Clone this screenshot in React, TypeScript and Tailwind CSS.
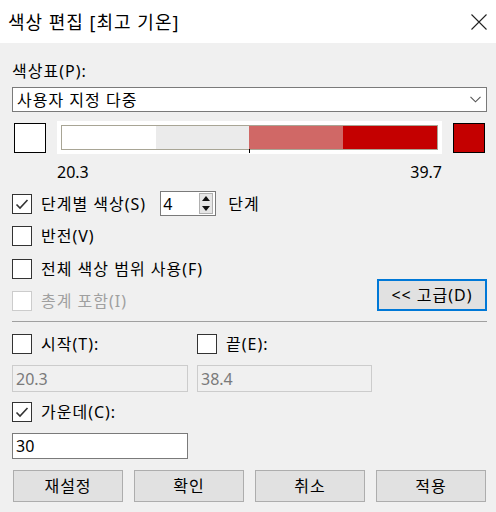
import React from "react";

const font = { fontFamily: '"Noto Sans", "Noto Sans CJK KR", sans-serif' };

function Check({ checked = false, disabled = false }: { checked?: boolean; disabled?: boolean }) {
  return (
    <div
      className={`w-[20px] h-[20px] bg-white border shrink-0 flex items-center justify-center ${
        disabled ? "border-[#cccccc]" : "border-[#333333]"
      }`}
    >
      {checked && (
        <svg width="16" height="16" viewBox="0 0 16 16">
          <path d="M2.5 8.5 L6 12 L13.5 4" fill="none" stroke="#333333" strokeWidth="1.6" />
        </svg>
      )}
    </div>
  );
}

function CheckRow({
  label,
  checked,
  disabled,
}: {
  label: string;
  checked?: boolean;
  disabled?: boolean;
}) {
  return (
    <div className="flex items-center gap-[9px] h-[20px]">
      <Check checked={checked} disabled={disabled} />
      <span
        className={`text-[16px] leading-[20px] tracking-[1px] ${
          disabled ? "text-[#a0a0a0]" : "text-black"
        }`}
      >
        {label}
      </span>
    </div>
  );
}

function Btn({ children }: { children: React.ReactNode }) {
  return (
    <div className="w-[110px] h-[32px] bg-[#e1e1e1] border border-[#adadad] flex items-center justify-center text-[16px] leading-[20px] tracking-[1px]">
      {children}
    </div>
  );
}

export default function App() {
  return (
    <div className="w-[496px] h-[512px] bg-[#f0f0f0] text-black overflow-hidden" style={font}>
      {/* title bar */}
      <div className="h-[43px] bg-white flex items-center justify-between pl-[8px] pr-[9px]">
        <span className="text-[18px] leading-[24px] tracking-[1px]">색상 편집 [최고 기온]</span>
        <svg width="16" height="16" viewBox="0 0 16 16">
          <path d="M0.5 0.5 L15.5 15.5 M15.5 0.5 L0.5 15.5" stroke="#222" strokeWidth="1.1" />
        </svg>
      </div>

      <div className="pl-[12px] pr-[9px] flex flex-col">
        <div className="mt-[18px] h-[20px] text-[16px] leading-[20px] tracking-[1px]">색상표(P):</div>

        {/* dropdown */}
        <div className="mt-[6px] h-[25px] bg-white border border-[#7a7a7a] flex items-center justify-between pl-[4px] pr-[5px]">
          <span className="text-[16px] leading-[20px] tracking-[1px]">사용자 지정 다중</span>
          <svg width="11" height="7" viewBox="0 0 11 7">
            <path d="M0.5 0.8 L5.5 5.8 L10.5 0.8" fill="none" stroke="#555" strokeWidth="1.1" />
          </svg>
        </div>

        {/* colour ramp */}
        <div className="mt-[9px] h-[33px] flex items-center">
          <div className="ml-[2px] w-[32px] h-[30px] bg-white border border-black" />
          <div className="ml-[11px] w-[385px] h-[33px] bg-white p-[4px] relative">
            <div className="h-full border border-[#a8a595] flex">
              <div className="w-[94px] bg-white" />
              <div className="w-[93px] bg-[#ebebeb]" />
              <div className="w-[94px] bg-[#d06866]" />
              <div className="flex-1 bg-[#c40000]" />
            </div>
            <div className="absolute left-[192px] top-[28px] w-[1px] h-[4px] bg-black" />
          </div>
          <div className="ml-[11px] w-[32px] h-[30px] bg-[#c40000] border border-black" />
        </div>

        <div className="mt-[8px] h-[20px] flex justify-between pl-[45px] w-[430px] text-[16px] leading-[20px]">
          <span>20.3</span>
          <span>39.7</span>
        </div>

        {/* steps row */}
        <div className="mt-[9px] h-[25px] flex items-center">
          <CheckRow label="단계별 색상(S)" checked />
          <div className="ml-[14px] w-[56px] h-[25px] bg-white border border-[#7a7a7a] flex items-center justify-between pl-[2px] pr-[2px]">
            <span className="text-[16px] leading-[20px]">4</span>
            <div className="w-[14px] h-[21px] bg-[#e6e6e6] border border-[#b0b0b0] flex flex-col">
              <div className="flex-1 flex items-center justify-center">
                <svg width="8" height="5" viewBox="0 0 8 5">
                  <path d="M0 5 L4 0 L8 5 Z" fill="#111" />
                </svg>
              </div>
              <div className="flex-1 flex items-center justify-center">
                <svg width="8" height="5" viewBox="0 0 8 5">
                  <path d="M0 0 L4 5 L8 0 Z" fill="#111" />
                </svg>
              </div>
            </div>
          </div>
          <span className="ml-[12px] text-[16px] leading-[20px] tracking-[1px]">단계</span>
        </div>

        <div className="mt-[10px]">
          <CheckRow label="반전(V)" />
        </div>
        <div className="mt-[13px]">
          <CheckRow label="전체 색상 범위 사용(F)" />
        </div>

        <div className="h-[32px] flex items-end justify-between">
          <CheckRow label="총계 포함(I)" disabled />
          <div className="w-[110px] h-[32px] bg-[#e1e1e1] border-2 border-[#0078d7] flex items-center justify-center text-[16px] leading-[20px] tracking-[1px]">
            &lt;&lt; 고급(D)
          </div>
        </div>

        <div className="mt-[10px] h-[1px] bg-[#a0a0a0]" />

        <div className="mt-[12px] flex gap-[9px]">
          <div className="w-[176px]">
            <CheckRow label="시작(T):" />
          </div>
          <CheckRow label="끝(E):" />
        </div>

        <div className="mt-[11px] flex gap-[9px]">
          <div className="w-[176px] h-[27px] border border-[#cccccc] bg-[#f0f0f0] flex items-center pl-[3px] text-[16px] leading-[20px] text-[#7a7a7a]">
            20.3
          </div>
          <div className="w-[175px] h-[27px] border border-[#cccccc] bg-[#f0f0f0] flex items-center pl-[3px] text-[16px] leading-[20px] text-[#7a7a7a]">
            38.4
          </div>
        </div>

        <div className="mt-[10px]">
          <CheckRow label="가운데(C):" checked />
        </div>

        <div className="mt-[11px] w-[176px] h-[26px] bg-white border border-[#7a7a7a] flex items-center pl-[3px] text-[16px] leading-[20px]">
          30
        </div>

        <div className="mt-[11px] ml-[1px] flex gap-[11px]">
          <Btn>재설정</Btn>
          <Btn>확인</Btn>
          <Btn>취소</Btn>
          <Btn>적용</Btn>
        </div>
      </div>
    </div>
  );
}
